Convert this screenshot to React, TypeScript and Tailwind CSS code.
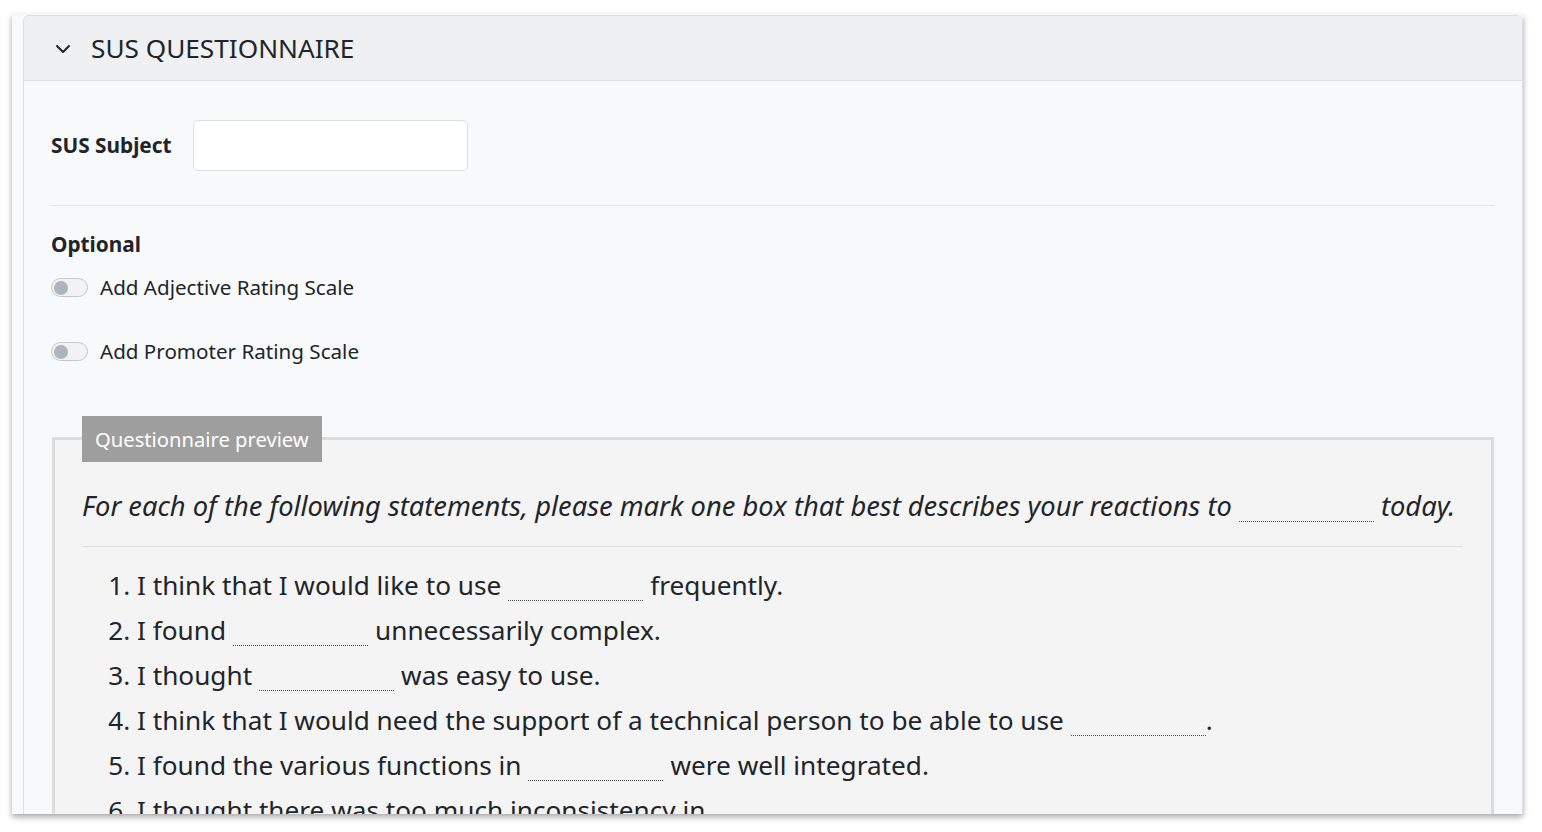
import React from 'react';

const questions: [string, string][] = [
  ['I think that I would like to use', 'frequently.'],
  ['I found', 'unnecessarily complex.'],
  ['I thought', 'was easy to use.'],
  ['I think that I would need the support of a technical person to be able to use', '.'],
  ['I found the various functions in', 'were well integrated.'],
  ['I thought there was too much inconsistency in', '.'],
];

function Blank() {
  return (
    <span className="mx-[7px] inline-block h-[22px] w-[135px] border-b border-dotted border-[#555] align-[-6px]" />
  );
}

function Toggle({ label }: { label: string }) {
  return (
    <label className="flex items-center gap-3">
      <span className="flex h-[19px] w-[37px] items-center rounded-full border border-[#c5c9ce] bg-[#f1f2f4] px-[2px]">
        <span className="h-[14px] w-[14px] rounded-full bg-[#adb5bd]" />
      </span>
      <span className="text-[20.6px] text-[#212529]">{label}</span>
    </label>
  );
}

export default function App() {
  return (
    <div className="h-[832px] w-[1542px] overflow-hidden bg-white pl-[12px] pt-[14px] font-['Noto_Sans',sans-serif]">
      <div className="h-[800px] w-[1511px] overflow-hidden bg-[#f8f9fa] pl-[11px] shadow-[0_3px_6px_rgba(0,0,0,0.35)]">
        <div className="mt-[1px] rounded-t-[6px] border border-[#dcdee1] bg-[#f8f9fa]">
          {/* header */}
          <div className="flex h-[65px] items-center gap-[20px] rounded-t-[6px] border-b border-[#dcdee1] bg-[#eff0f2] pl-[31px] pt-[2px]">
            <svg width="16" height="10" viewBox="0 0 16 10" fill="none" stroke="#212529" strokeWidth="2" strokeLinecap="round" strokeLinejoin="round">
              <polyline points="2,2 8,8 14,2" />
            </svg>
            <h2 className="text-[26.2px] text-[#212529]">SUS QUESTIONNAIRE</h2>
          </div>

          {/* body */}
          <div className="px-[27px] pt-[39px]">
            <div className="flex items-center gap-[21px]">
              <span className="text-[20.8px] font-bold text-[#212529]">SUS Subject</span>
              <input className="h-[51px] w-[275px] rounded-[5px] border border-[#dcdfe3] bg-white" />
            </div>
            <hr className="mt-[34px] border-[#e3e5e8]" />

            <div className="mt-[23px] text-[20.8px] font-bold text-[#212529]">Optional</div>
            <div className="mt-[12px] flex flex-col gap-[33px]">
              <Toggle label="Add Adjective Rating Scale" />
              <Toggle label="Add Promoter Rating Scale" />
            </div>

            <fieldset className="mt-[49px] ml-[1px] mr-[1px] border-[3px] border-[#dcdcdc] bg-[#f4f4f4] pl-[27px] pr-[28px]">
              <legend className="h-[46px] bg-[#9e9e9e] px-[13px] text-[20.2px] leading-[46px] text-white">Questionnaire preview</legend>
              <p className="mt-[24px] text-[27.3px] italic text-[#212529]">
                For each of the following statements, please mark one box that best describes your reactions to
                <Blank />
                today.
              </p>
              <hr className="mt-[19px] border-[#dedede]" />
              <ol className="mt-[16px] list-decimal pl-[55px] text-[26.2px] leading-[45px] text-[#212529]">
                {questions.map(([a, b], i) => (
                  <li key={i}>
                    {a}
                    <Blank />
                    {b === '.' ? <span className="-ml-[7px]">.</span> : b}
                  </li>
                ))}
              </ol>
            </fieldset>
          </div>
        </div>
      </div>
    </div>
  );
}
